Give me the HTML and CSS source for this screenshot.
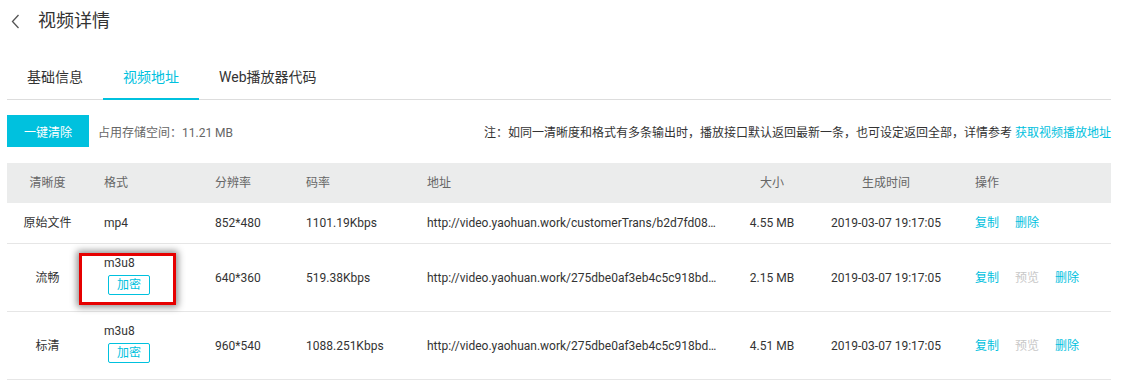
FILE: index.html
```html
<!DOCTYPE html>
<html lang="zh-CN">
<head>
  <meta charset="UTF-8">
  <title>视频详情</title>
  <link rel="stylesheet" href="styles.css">
</head>
<body>
  <div class="page">
    <!-- Header -->
    <div class="page-header">
      <a href="#" class="back">
        <svg width="9" height="15" viewBox="0 0 9 15"><polyline points="7.5,1 1.5,7.5 7.5,14" fill="none" stroke="#555" stroke-width="1.3"/></svg>
      </a>
      <h1 class="page-title">视频详情</h1>
    </div>

    <!-- Tabs -->
    <div class="tabs">
      <a href="#" class="tab">基础信息</a>
      <a href="#" class="tab active">视频地址</a>
      <a href="#" class="tab">Web播放器代码</a>
    </div>

    <!-- Toolbar -->
    <div class="toolbar">
      <button class="btn-primary">一键清除</button>
      <span class="storage">占用存储空间：11.21 MB</span>
      <p class="note">注：如同一清晰度和格式有多条输出时，播放接口默认返回最新一条，也可设定返回全部，详情参考 <a href="#">获取视频播放地址</a></p>
    </div>

    <!-- Table -->
    <table class="data-table">
      <colgroup>
        <col style="width: 81px">
        <col style="width: 111px">
        <col style="width: 91px">
        <col style="width: 121px">
        <col style="width: 320px">
        <col style="width: 82px">
        <col style="width: 146px">
        <col style="width: 152px">
      </colgroup>
      <thead>
        <tr>
          <th class="center">清晰度</th>
          <th>格式</th>
          <th>分辨率</th>
          <th>码率</th>
          <th>地址</th>
          <th class="center">大小</th>
          <th class="center">生成时间</th>
          <th>操作</th>
        </tr>
      </thead>
      <tbody>
        <tr>
          <td class="center">原始文件</td>
          <td>mp4</td>
          <td>852*480</td>
          <td>1101.19Kbps</td>
          <td class="url" title="http://video.yaohuan.work/customerTrans/b2d7fd08">http://video.yaohuan.work/customerTrans/b2d7fd08…</td>
          <td class="center">4.55 MB</td>
          <td class="center">2019-03-07 19:17:05</td>
          <td class="ops"><a href="#">复制</a><a href="#">删除</a></td>
        </tr>
        <tr class="tall">
          <td class="center">流畅</td>
          <td>
            <div class="fmt">
              <div>m3u8</div>
              <span class="tag">加密</span>
              <div class="highlight"></div>
            </div>
          </td>
          <td>640*360</td>
          <td>519.38Kbps</td>
          <td class="url">http://video.yaohuan.work/275dbe0af3eb4c5c918bd…</td>
          <td class="center">2.15 MB</td>
          <td class="center">2019-03-07 19:17:05</td>
          <td class="ops"><a href="#">复制</a><a href="#" class="disabled">预览</a><a href="#">删除</a></td>
        </tr>
        <tr class="tall">
          <td class="center">标清</td>
          <td>
            <div class="fmt">
              <div>m3u8</div>
              <span class="tag">加密</span>
            </div>
          </td>
          <td>960*540</td>
          <td>1088.251Kbps</td>
          <td class="url">http://video.yaohuan.work/275dbe0af3eb4c5c918bd…</td>
          <td class="center">4.51 MB</td>
          <td class="center">2019-03-07 19:17:05</td>
          <td class="ops"><a href="#">复制</a><a href="#" class="disabled">预览</a><a href="#">删除</a></td>
        </tr>
      </tbody>
    </table>
  </div>
</body>
</html>
```

FILE: styles.css
```css
:root {
  --primary: #00c1de;
  --text: #333;
  --text-muted: #666;
  --border: #e6e6e6;
}

* {
  margin: 0;
  padding: 0;
  box-sizing: border-box;
}

body {
  font-family: Roboto, "Noto Sans CJK SC", sans-serif;
  font-size: 12px;
  color: var(--text);
  background: #fff;
}

a {
  text-decoration: none;
}

.page {
  padding: 0 13px 0 7px;
}

/* Header */
.page-header {
  height: 42px;
  display: flex;
  align-items: center;
  padding-left: 4px;
}

.back {
  display: flex;
  align-items: center;
  margin-right: 18px;
}

.page-title {
  font-size: 18px;
  font-weight: 400;
  color: var(--text);
  line-height: 24px;
}

/* Tabs */
.tabs {
  margin-top: 14px;
  display: flex;
  border-bottom: 1px solid #ddd;
}

.tab {
  padding: 11px 20px;
  line-height: 20px;
  font-size: 14px;
  color: var(--text);
  border-bottom: 2px solid transparent;
  margin-bottom: -1px;
}

.tab.active {
  color: var(--primary);
  border-bottom-color: var(--primary);
}

/* Toolbar */
.toolbar {
  margin-top: 15px;
  display: flex;
  align-items: center;
}

.btn-primary {
  width: 82px;
  height: 32px;
  background: var(--primary);
  color: #fff;
  border: none;
  font-family: inherit;
  font-size: 12px;
  cursor: pointer;
}

.storage {
  margin-left: 9px;
  color: var(--text-muted);
}

.note {
  margin-left: auto;
  color: var(--text);
}

.note a {
  color: var(--primary);
}

/* Table */
.data-table {
  margin-top: 16px;
  width: 1104px;
  table-layout: fixed;
  border-collapse: collapse;
}

.data-table th {
  background: #ebecec;
  color: var(--text-muted);
  font-weight: 400;
  text-align: left;
  padding: 12px 16px;
  line-height: 16px;
}

.data-table td {
  padding: 12px 16px;
  line-height: 16px;
  border-bottom: 1px solid var(--border);
  vertical-align: middle;
  white-space: nowrap;
}

.data-table tr.tall td {
  padding-top: 11px;
  padding-bottom: 10px;
}

.data-table .center {
  text-align: center;
  padding-left: 0;
  padding-right: 0;
}

.fmt {
  position: relative;
}

.tag {
  display: inline-block;
  width: 42px;
  height: 20px;
  margin: 4px 0 6px 4px;
  border: 1px solid var(--primary);
  border-radius: 2px;
  color: var(--primary);
  text-align: center;
  line-height: 18px;
}

.highlight {
  position: absolute;
  left: -25px;
  top: -2px;
  width: 97px;
  height: 52px;
  border: 3px solid #e60000;
  box-shadow: 0 0 7px 2px rgba(0, 0, 0, 0.45);
}

.data-table .ops {
  padding-right: 0;
}

.ops a {
  color: var(--primary);
  margin-right: 16px;
}

.ops a:last-child {
  margin-right: 0;
}

.ops a.disabled {
  color: #c8c8c8;
}
```
